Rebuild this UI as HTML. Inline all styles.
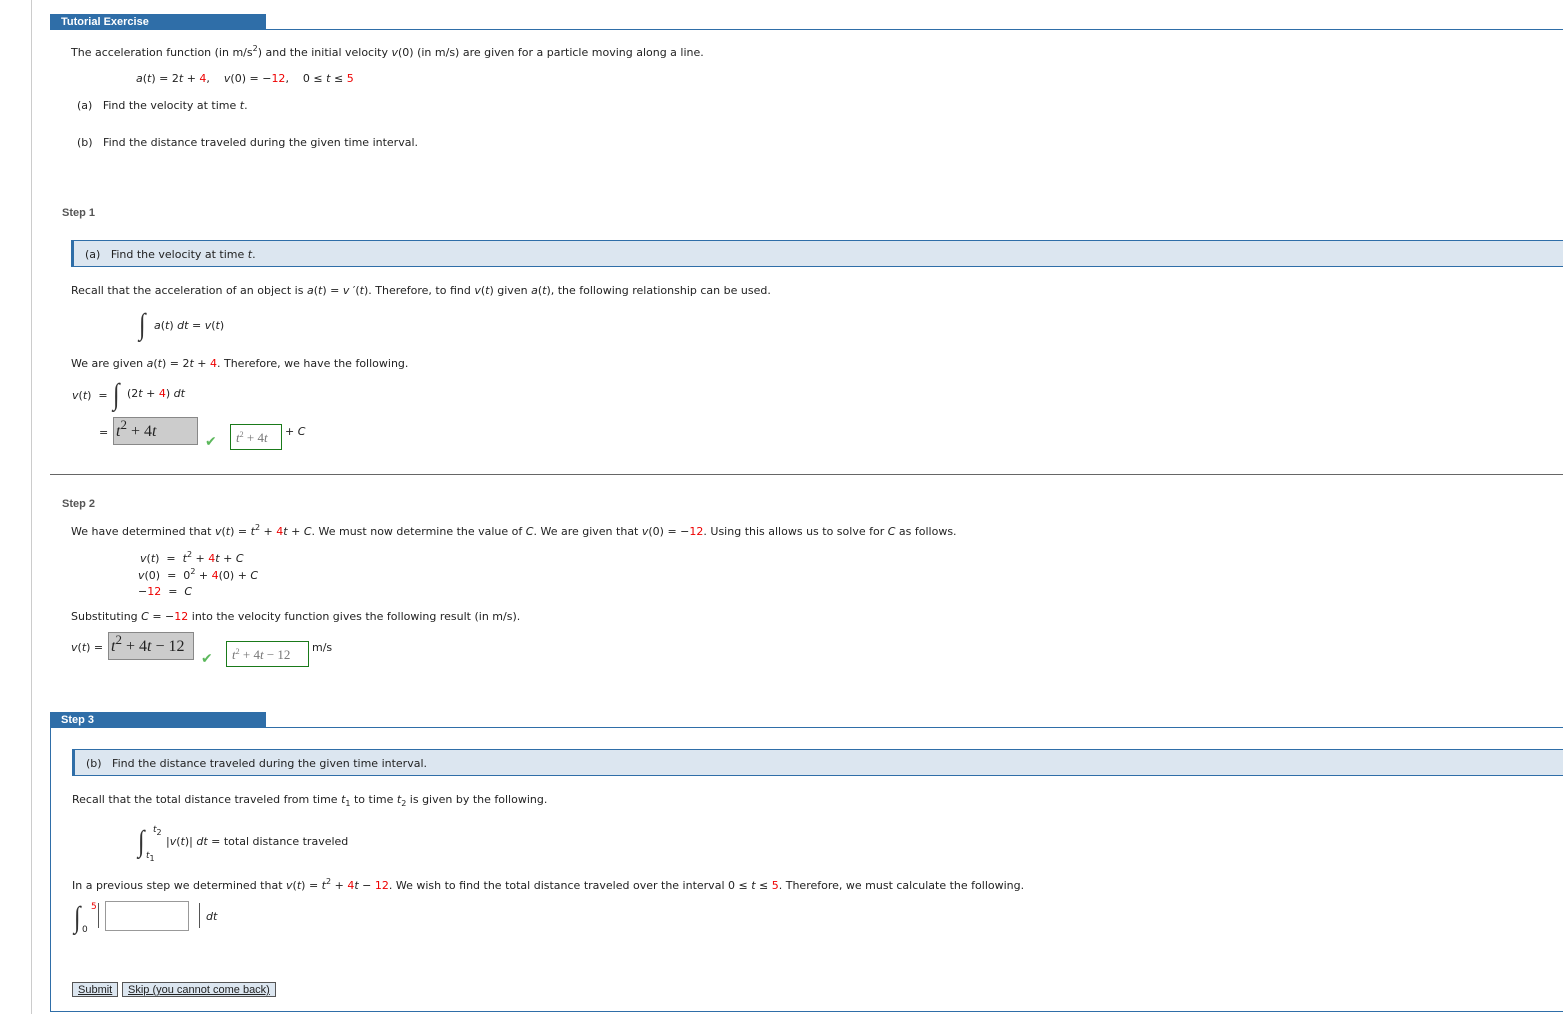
<!DOCTYPE html>
<html><head><meta charset="utf-8">
<style>
body{margin:0;width:1563px;height:1014px;background:#fff;position:relative;overflow:hidden;font-family:"DejaVu Sans","Liberation Sans",sans-serif;font-size:11px;color:#222;}
.a{position:absolute;white-space:nowrap;line-height:14px;margin-top:1px;}
i{font-style:italic}
.r{color:#e00}
sup{font-size:8px;vertical-align:5px;line-height:0}
sub{font-size:8px;vertical-align:-3px;line-height:0}
.hdr{position:absolute;background:#2f6ea8;color:#fff;font-weight:bold;font-size:11px;height:15px;line-height:16px;padding-left:11px;font-family:"Liberation Sans",sans-serif;}
.hl{position:absolute;height:1px;background:#2f6ea8;}
.box{position:absolute;left:71px;right:0;height:25px;background:#dce6f0;border-top:1px solid #2f6ea8;border-bottom:1px solid #2f6ea8;border-left:3px solid #2f6ea8;}
.step{position:absolute;font-weight:bold;color:#555;font-family:"Liberation Sans",sans-serif;font-size:11px;margin-top:1px;}
.gray{position:absolute;background:#ccc;border:1px solid #888;font-family:"Liberation Serif",serif;font-size:16px;line-height:28px;padding-left:2px;}
.grn{position:absolute;border:1px solid #1a7a1a;font-family:"Liberation Serif",serif;font-size:13px;color:#777;line-height:26px;padding-left:5px;}
.chk{position:absolute;color:#5cb85c;font-size:14px;}
.int{position:absolute;font-family:"Liberation Serif",serif;font-size:30px;line-height:30px;color:#333;transform:scaleX(0.8);}
.btn{position:absolute;top:982px;height:13px;border:1px solid #555;background:#dce6f0;font-family:"Liberation Sans",sans-serif;font-size:11px;line-height:14px;text-decoration:underline;padding:0 5px;color:#222;}
</style></head><body>
<div style="position:absolute;left:31px;top:0;width:1px;height:1014px;background:#ccc"></div>

<div class="hdr" style="left:50px;top:14px;width:205px;">Tutorial Exercise</div>
<div class="hl" style="left:50px;right:0;top:29px;"></div>

<div class="a" style="left:71px;top:45px">The acceleration function (in m/s<sup>2</sup>) and the initial velocity <i>v</i>(0) (in m/s) are given for a particle moving along a line.</div>
<div class="a" style="left:136px;top:71px"><i>a</i>(<i>t</i>) = 2<i>t</i> + <span class="r">4</span>,&nbsp;&nbsp;&nbsp; <i>v</i>(0) = −<span class="r">12</span>,&nbsp;&nbsp;&nbsp; 0 ≤ <i>t</i> ≤ <span class="r">5</span></div>
<div class="a" style="left:77px;top:98px">(a)&nbsp;&nbsp; Find the velocity at time <i>t</i>.</div>
<div class="a" style="left:77px;top:135px">(b)&nbsp;&nbsp; Find the distance traveled during the given time interval.</div>

<div class="step" style="left:62px;top:206px">Step 1</div>
<div class="box" style="top:240px"></div>
<div class="a" style="left:85px;top:247px">(a)&nbsp;&nbsp; Find the velocity at time <i>t</i>.</div>
<div class="a" style="left:71px;top:283px">Recall that the acceleration of an object is <i>a</i>(<i>t</i>) = <i>v</i> ′(<i>t</i>). Therefore, to find <i>v</i>(<i>t</i>) given <i>a</i>(<i>t</i>), the following relationship can be used.</div>
<div class="int" style="left:138px;top:310px">∫</div>
<div class="a" style="left:154px;top:318px"><i>a</i>(<i>t</i>) <i>dt</i> = <i>v</i>(<i>t</i>)</div>
<div class="a" style="left:71px;top:356px">We are given <i>a</i>(<i>t</i>) = 2<i>t</i> + <span class="r">4</span>. Therefore, we have the following.</div>
<div class="a" style="left:72px;top:388px"><i>v</i>(<i>t</i>)&nbsp; =</div>
<div class="int" style="left:112px;top:380px">∫</div>
<div class="a" style="left:127px;top:386px">(2<i>t</i> + <span class="r">4</span>) <i>dt</i></div>
<div class="a" style="left:99px;top:425px">=</div>
<div class="gray" style="left:113px;top:417px;width:81px;height:26px"><i>t</i><sup style="font-size:13px;vertical-align:7px">2</sup> + 4<i>t</i></div>
<div class="chk" style="left:205px;top:434px">✔</div>
<div class="grn" style="left:230px;top:424px;width:45px;height:24px"><i>t</i><sup>2</sup> + 4<i>t</i></div>
<div class="a" style="left:285px;top:424px">+ <i>C</i></div>
<div style="position:absolute;left:50px;right:0;top:474px;height:1px;background:#666"></div>

<div class="step" style="left:62px;top:497px">Step 2</div>
<div class="a" style="left:71px;top:524px">We have determined that <i>v</i>(<i>t</i>) = <i>t</i><sup>2</sup> + <span class="r">4</span><i>t</i> + <i>C</i>. We must now determine the value of <i>C</i>. We are given that <i>v</i>(0) = −<span class="r">12</span>. Using this allows us to solve for <i>C</i> as follows.</div>
<div class="a" style="left:140px;top:551px"><i>v</i>(<i>t</i>)&nbsp; =&nbsp; <i>t</i><sup>2</sup> + <span class="r">4</span><i>t</i> + <i>C</i></div>
<div class="a" style="left:138px;top:568px"><i>v</i>(0)&nbsp; =&nbsp; 0<sup>2</sup> + <span class="r">4</span>(0) + <i>C</i></div>
<div class="a" style="left:138px;top:584px">−<span class="r">12</span>&nbsp; =&nbsp; <i>C</i></div>
<div class="a" style="left:71px;top:609px">Substituting <i>C</i> = −<span class="r">12</span> into the velocity function gives the following result (in m/s).</div>
<div class="a" style="left:71px;top:640px"><i>v</i>(<i>t</i>) =</div>
<div class="gray" style="left:108px;top:632px;width:82px;height:26px"><i>t</i><sup style="font-size:13px;vertical-align:7px">2</sup> + 4<i>t</i> − 12</div>
<div class="chk" style="left:201px;top:651px">✔</div>
<div class="grn" style="left:226px;top:641px;width:76px;height:24px"><i>t</i><sup>2</sup> + 4<i>t</i> − 12</div>
<div class="a" style="left:312px;top:640px">m/s</div>

<div class="hdr" style="left:50px;top:712px;width:205px;">Step 3</div>
<div style="position:absolute;left:50px;right:0;top:727px;height:283px;border-top:1px solid #2f6ea8;border-left:1px solid #2f6ea8;border-bottom:1px solid #2f6ea8"></div>
<div class="box" style="top:749px;left:72px"></div>
<div class="a" style="left:86px;top:756px">(b)&nbsp;&nbsp; Find the distance traveled during the given time interval.</div>
<div class="a" style="left:72px;top:792px">Recall that the total distance traveled from time <i>t</i><sub>1</sub> to time <i>t</i><sub>2</sub> is given by the following.</div>
<div class="int" style="left:137px;top:827px">∫</div>
<div class="a" style="left:153px;top:822px;font-size:9px"><i>t</i><sub>2</sub></div>
<div class="a" style="left:146px;top:848px;font-size:9px"><i>t</i><sub>1</sub></div>
<div class="a" style="left:166px;top:834px">|<i>v</i>(<i>t</i>)| <i>dt</i> = total distance traveled</div>
<div class="a" style="left:72px;top:878px">In a previous step we determined that <i>v</i>(<i>t</i>) = <i>t</i><sup>2</sup> + <span class="r">4</span><i>t</i> − <span class="r">12</span>. We wish to find the total distance traveled over the interval 0 ≤ <i>t</i> ≤ <span class="r">5</span>. Therefore, we must calculate the following.</div>
<div class="int" style="left:73px;top:903px">∫</div>
<div class="a" style="left:91px;top:899px;font-size:9px;color:#e00">5</div>
<div class="a" style="left:82px;top:922px;font-size:9px">0</div>
<div style="position:absolute;left:98px;top:903px;width:1px;height:25px;background:#555"></div>
<div style="position:absolute;left:105px;top:901px;width:82px;height:28px;border:1px solid #999;background:#fff"></div>
<div style="position:absolute;left:199px;top:903px;width:1px;height:25px;background:#555"></div>
<div class="a" style="left:206px;top:909px"><i>dt</i></div>

<div class="btn" style="left:72px;">Submit</div>
<div class="btn" style="left:122px;">Skip (you cannot come back)</div>
</body></html>
